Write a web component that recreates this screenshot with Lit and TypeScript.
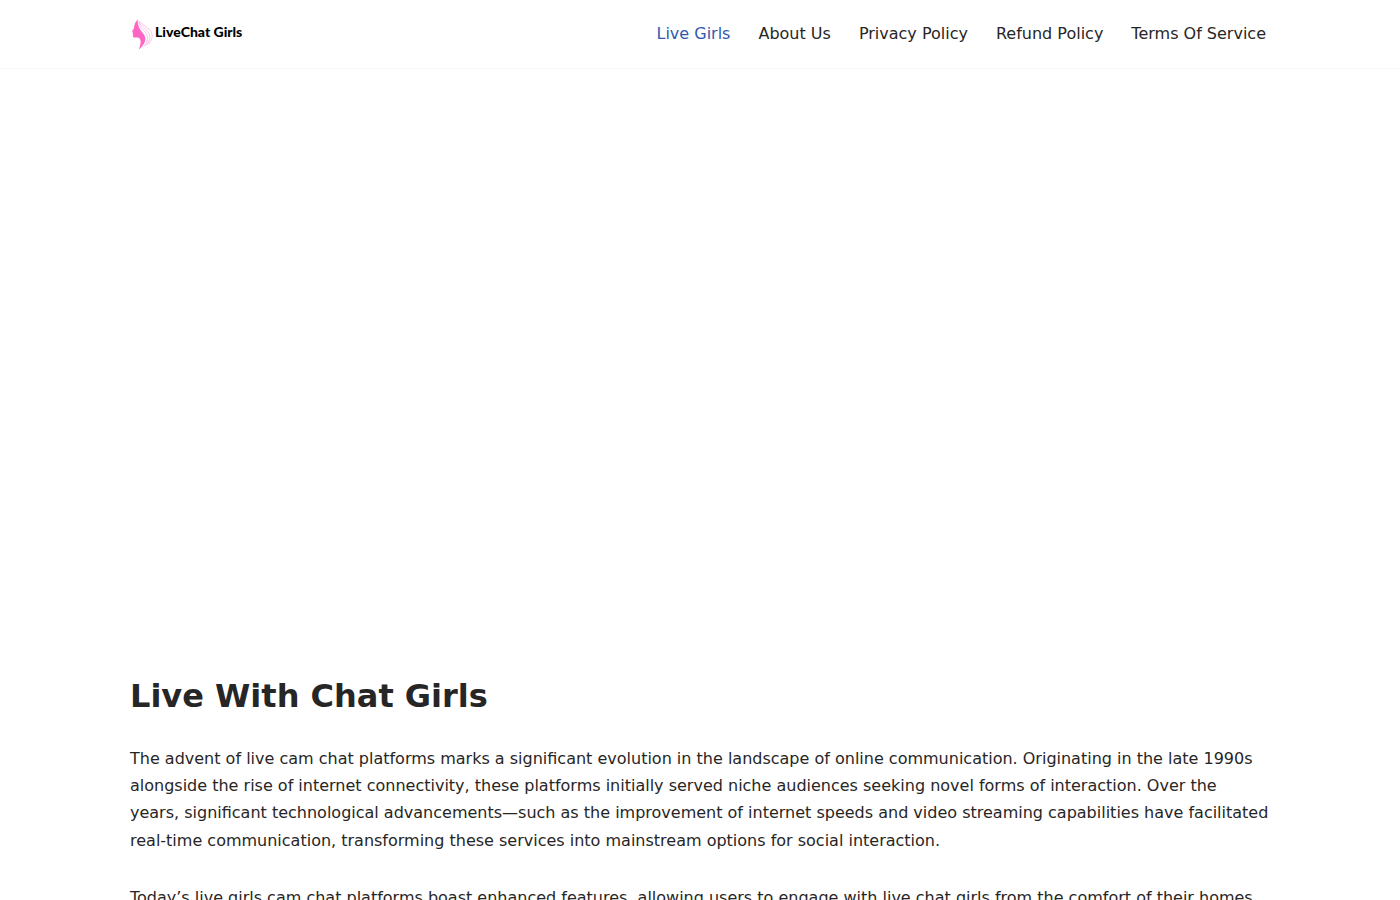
import { LitElement, html, css } from "lit";
import { customElement } from "lit/decorators.js";
import { classMap } from "lit/directives/class-map.js";

const LINKS = [
  { label: "Live Girls", current: true },
  { label: "About Us", current: false },
  { label: "Privacy Policy", current: false },
  { label: "Refund Policy", current: false },
  { label: "Terms Of Service", current: false },
];

@customElement("site-header")
class SiteHeader extends LitElement {
  static styles = css`
    :host {
      display: block;
      border-bottom: 1px solid #f8f8f8;
    }
    .bar {
      box-sizing: border-box;
      max-width: 1170px;
      min-height: 68px;
      margin: 0 auto;
      padding: 0 15px;
      display: flex;
      align-items: center;
      justify-content: space-between;
      gap: 28px;
    }
    .brand {
      display: flex;
      align-items: center;
      gap: 2px;
      padding-left: 2px;
      color: #000;
      text-decoration: none;
    }
    .mark {
      display: block;
      width: 21px;
      height: 32px;
    }
    .name {
      font: 900 14px/20px Lato, sans-serif;
      padding-bottom: 4px;
    }
    .menu {
      display: flex;
      flex-wrap: wrap;
      gap: 0 28px;
      margin: 0;
      padding: 0 4px 0 0;
      list-style: none;
    }
    .link {
      color: #272626;
      text-decoration: none;
      line-height: 24px;
    }
    .link.current,
    .link:hover {
      color: #2f5aae;
    }
  `;

  render() {
    return html`
      <header class="bar">
        <a class="brand" href="#">
          <svg class="mark" viewBox="0 0 21 32" aria-hidden="true">
            <path
              fill="#ff66c4"
              d="M6 1.6C4 3.2 2.8 5.2 2.4 7.6L1.9 10.6L0 13.1L0.8 14L0.5 15.2L1.1 16.2L0.8 18.8C1.8 20 4.4 19 6 19.6C8.6 20.6 9 23.6 8.4 26.2C8 28 7.4 29.8 6.8 31.6C10.4 28.4 13.6 24.4 13.4 20.4C13 16.2 9.2 13.6 7.6 10.4C6.2 7.6 5 4.4 6 1.6Z"
            />
            <g fill="none" stroke="#ff66c4" stroke-width="0.6" stroke-opacity="0.65">
              <path d="M6.6 4.5C7.6 10.5 15.4 13.6 15.6 19.6C15.8 24 13.2 27.3 10.6 29.2" />
              <path d="M6.8 3.6C9.4 9.4 17.6 12.2 17.8 18.2C18 22.6 15.6 26 13.2 28" />
              <path d="M7 2.6C10.8 8 19.9 10.4 20.2 17.2C20.4 21.4 18 24.8 15.8 26.6" />
            </g>
          </svg>
          <span class="name">LiveChat Girls</span>
        </a>
        <nav aria-label="Primary">
          <ul class="menu">
            ${LINKS.map(
              (l) => html`<li>
                <a class=${classMap({ link: true, current: l.current })} href="#">${l.label}</a>
              </li>`
            )}
          </ul>
        </nav>
      </header>
    `;
  }
}

@customElement("app-root")
class AppRoot extends LitElement {
  static styles = css`
    :host {
      display: block;
      min-height: 100vh;
      background: #fff;
      color: #272626;
      font: 16px/1.7 "DejaVu Sans", sans-serif;
    }
    .content {
      box-sizing: border-box;
      max-width: 1170px;
      margin: 0 auto;
      padding: 0 15px;
    }
    .stage {
      height: 606px;
    }
    .title {
      margin: 0 0 28px;
      font-size: 32px;
      line-height: 42px;
      font-weight: 700;
    }
    .text {
      margin: 0 0 30px;
    }
  `;

  render() {
    return html`
      <site-header></site-header>
      <main class="content">
        <div class="stage"></div>
        <h1 class="title">Live With Chat Girls</h1>
        <p class="text">
          The advent of live cam chat platforms marks a significant evolution in the landscape of
          online communication. Originating in the late 1990s alongside the rise of internet
          connectivity, these platforms initially served niche audiences seeking novel forms of
          interaction. Over the years, significant technological advancements—such as the
          improvement of internet speeds and video streaming capabilities have facilitated
          real-time communication, transforming these services into mainstream options for social
          interaction.
        </p>
        <p class="text">
          Today’s live girls cam chat platforms boast enhanced features, allowing users to engage
          with live chat girls from the comfort of their homes.
        </p>
      </main>
    `;
  }
}
